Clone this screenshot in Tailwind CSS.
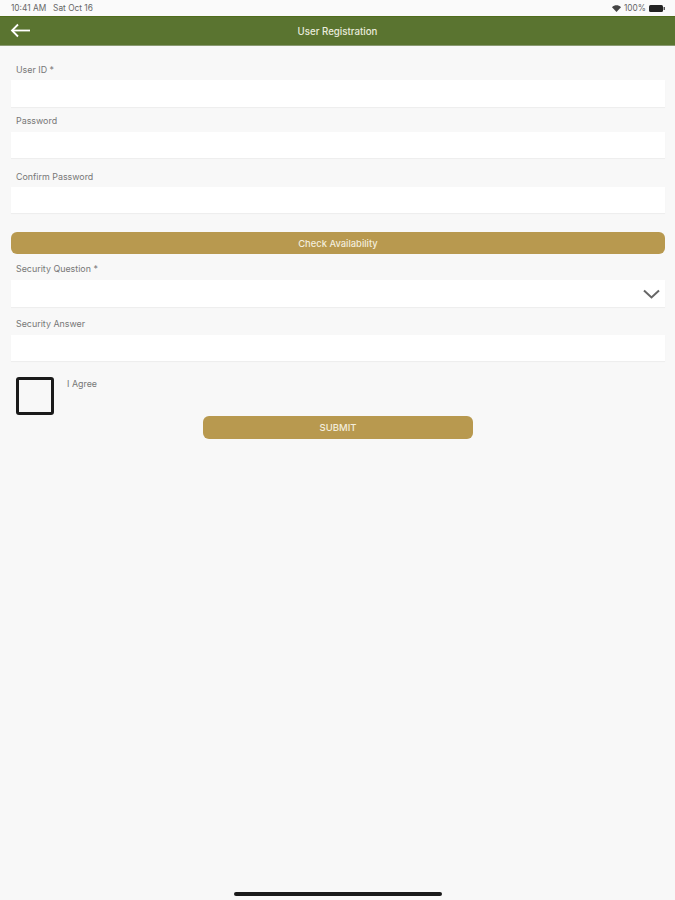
<!DOCTYPE html>
<html lang="en">

<head>
    <meta charset="UTF-8">
    <meta name="viewport" content="width=device-width, initial-scale=1.0">
    <title>User Registration</title>
    <script src="https://cdn.jsdelivr.net/npm/@tailwindcss/browser@4"></script>
</head>

<body class="bg-[#f8f8f8] font-['Inter','Liberation_Sans',sans-serif]">
    <div class="flex flex-col h-[900px] w-[675px] overflow-hidden">

        <!-- status bar -->
        <div class="flex items-center justify-between h-[16px] pl-[11px] pr-[10px] bg-[#fafafa] text-[8.3px] text-[#666]">
            <span>10:41 AM&nbsp;&nbsp;&nbsp;Sat Oct 16</span>
            <div class="flex items-center gap-[3px]">
                <svg width="9" height="7" viewBox="0 0 9 7"><path d="M0 2.2C2.6-.4 6.4-.4 9 2.2L4.5 7z" fill="#444"/></svg>
                <span>100%</span>
                <svg width="16" height="7" viewBox="0 0 16 7"><rect width="14" height="7" rx="1.5" fill="#222"/><rect x="14.5" y="2" width="1.5" height="3" fill="#555"/></svg>
            </div>
        </div>

        <!-- header -->
        <div class="relative flex items-center justify-center h-[30px] pt-[2px] bg-[#5a7430] border-t border-t-[#4f6c1c] border-b border-b-[#8a9a72]">
            <svg class="absolute left-[10px] top-[6px]" width="21" height="15" viewBox="0 0 21 15" fill="none" stroke="#fff" stroke-width="1.8">
                <path d="M20 7.5H2"/>
                <path d="M8 1.5L2 7.5l6 6"/>
            </svg>
            <span class="text-[9.7px] font-medium text-[#e9ebdc]">User Registration</span>
        </div>

        <div class="flex flex-col pl-[11px] pr-[10px]">
            <label class="pl-[5px] pt-[18px] h-[34px] text-[8.9px] leading-[12px] text-[#777]">User ID *</label>
            <div class="h-[27px] bg-white shadow-[0_1px_1px_rgba(0,0,0,0.04)]"></div>

            <label class="pl-[5px] pt-[8px] h-[25px] text-[8.9px] leading-[12px] text-[#777]">Password</label>
            <div class="h-[26px] bg-white shadow-[0_1px_1px_rgba(0,0,0,0.04)]"></div>

            <label class="pl-[5px] pt-[13px] h-[29px] text-[8.9px] leading-[12px] text-[#777]">Confirm Password</label>
            <div class="h-[26px] bg-white shadow-[0_1px_1px_rgba(0,0,0,0.04)]"></div>

            <button class="mt-[19px] h-[22px] pt-[2px] rounded-[6px] bg-[#b8994f] text-[9.4px] font-medium text-[#f3eddc]">Check Availability</button>

            <label class="pl-[5px] pt-[9px] h-[26px] text-[8.9px] leading-[12px] text-[#777]">Security Question *</label>
            <div class="flex items-center justify-end h-[27px] pr-[5px] bg-white shadow-[0_1px_1px_rgba(0,0,0,0.04)]">
                <svg width="17" height="10" viewBox="0 0 17 10" fill="none" stroke="#666" stroke-width="2">
                    <path d="M1 1.5l7.5 7 7.5-7"/>
                </svg>
            </div>

            <label class="pl-[5px] pt-[11px] h-[28px] text-[8.9px] leading-[12px] text-[#777]">Security Answer</label>
            <div class="h-[26px] bg-white shadow-[0_1px_1px_rgba(0,0,0,0.04)]"></div>

            <div class="flex items-start pl-[5px] mt-[16px]">
                <div class="w-[38px] h-[38px] rounded-[3px] border-[3px] border-[#1a1a1a]"></div>
                <span class="ml-[13px] mt-[1px] text-[8.9px] leading-[12px] text-[#777]">I Agree</span>
            </div>

            <button class="self-center mt-[1px] w-[270px] h-[23px] pt-[1px] rounded-[6px] bg-[#b8994f] text-[9.5px] font-medium text-[#f3eddc]">SUBMIT</button>
        </div>

        <!-- home indicator -->
        <div class="mt-auto mb-[4px] self-center w-[208px] h-[4px] rounded-full bg-[#1a1a1a]"></div>
    </div>
</body>

</html>
